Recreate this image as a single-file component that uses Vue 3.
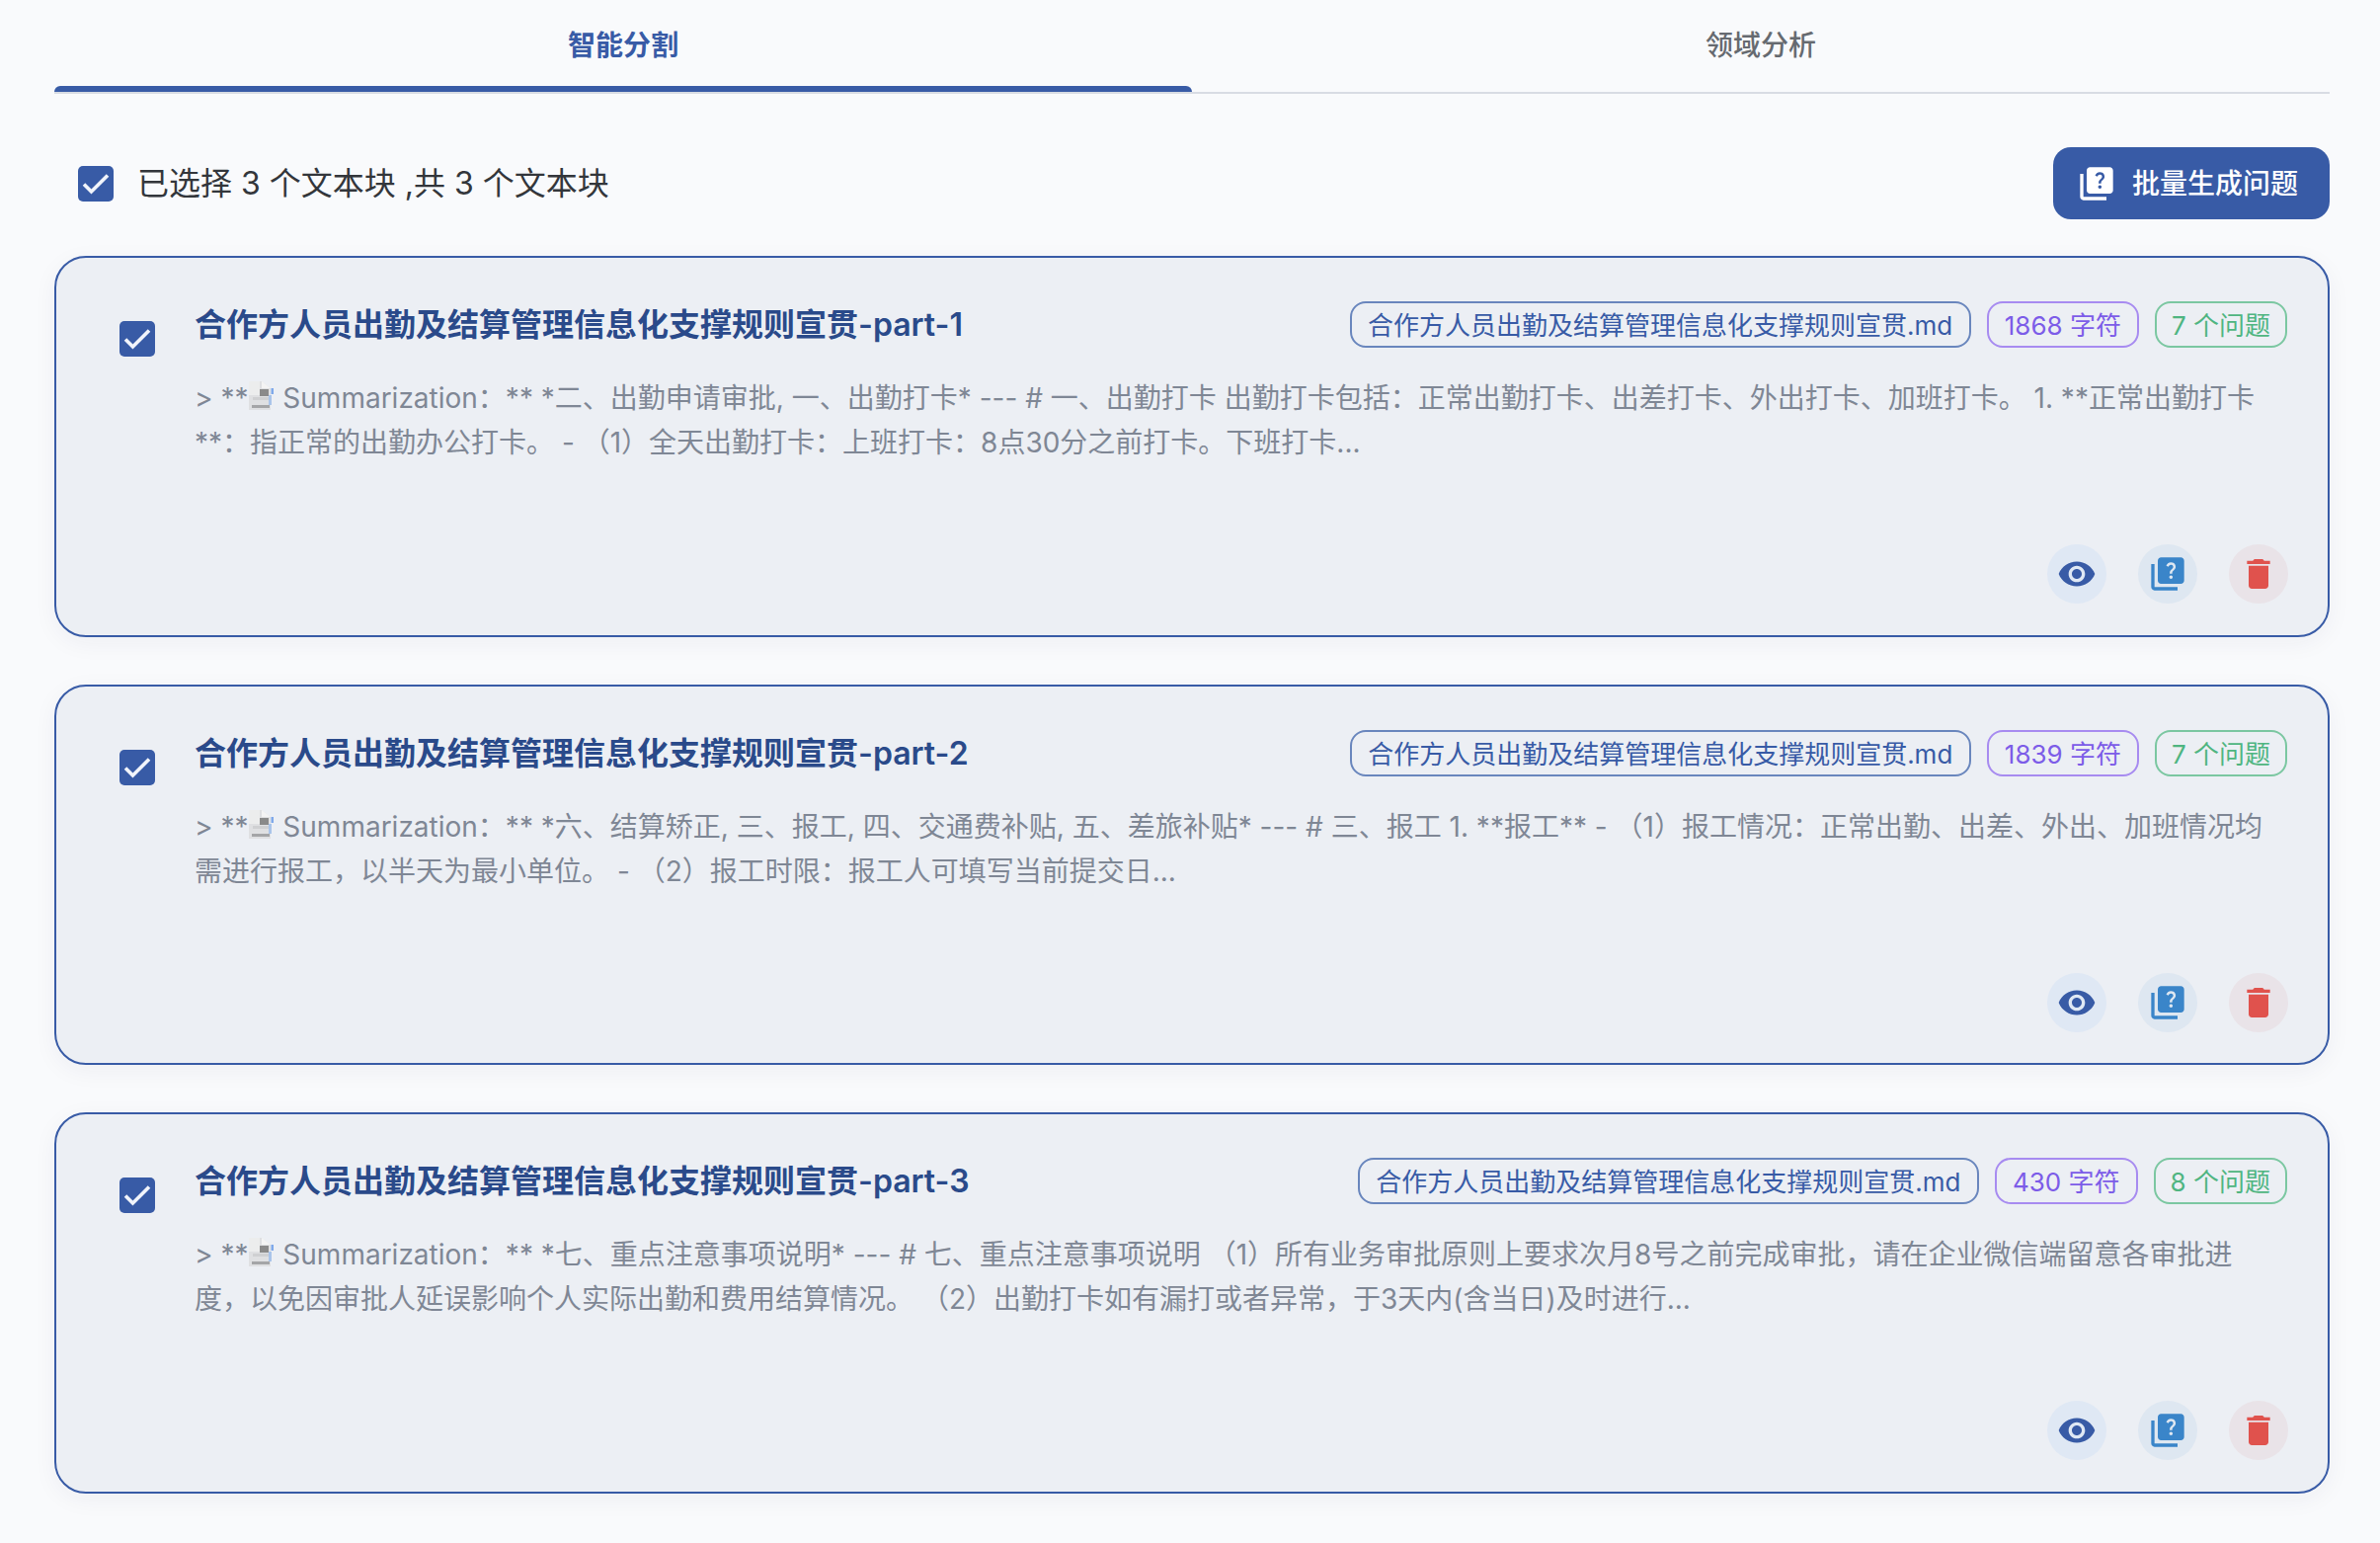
<script setup>
const quiz = 'M4 6H2v14c0 1.1.9 2 2 2h14v-2H4V6zm16-4H8c-1.1 0-2 .9-2 2v12c0 1.1.9 2 2 2h12c1.1 0 2-.9 2-2V4c0-1.1-.9-2-2-2zm-5.99 13c-.59 0-1.05-.47-1.05-1.05 0-.59.47-1.04 1.05-1.04.59 0 1.04.45 1.04 1.04-.01.58-.45 1.05-1.04 1.05zm2.5-6.17c-.63.93-1.23 1.21-1.56 1.81-.13.24-.18.4-.18 1.18h-1.52c0-.41-.06-1.08.26-1.65.41-.73 1.18-1.17 1.63-1.81.48-.68.21-1.94-1.14-1.94-.88 0-1.32.67-1.5 1.23l-1.37-.57C11.51 5.96 12.52 5 13.99 5c1.23 0 2.08.56 2.51 1.26.37.61.58 1.73.01 2.57z'
const file = '合作方人员出勤及结算管理信息化支撑规则宣贯.md'
const cards = [
  { title: '合作方人员出勤及结算管理信息化支撑规则宣贯-part-1', chars: '1868 字符', qs: '7 个问题',
    l1: ' Summarization：** *二、出勤申请审批, 一、出勤打卡* --- # 一、出勤打卡 出勤打卡包括：正常出勤打卡、出差打卡、外出打卡、加班打卡。 1. **正常出勤打卡',
    l2: '**：指正常的出勤办公打卡。 - （1）全天出勤打卡：上班打卡：8点30分之前打卡。下班打卡...' },
  { title: '合作方人员出勤及结算管理信息化支撑规则宣贯-part-2', chars: '1839 字符', qs: '7 个问题',
    l1: ' Summarization：** *六、结算矫正, 三、报工, 四、交通费补贴, 五、差旅补贴* --- # 三、报工 1. **报工** - （1）报工情况：正常出勤、出差、外出、加班情况均',
    l2: '需进行报工，以半天为最小单位。 - （2）报工时限：报工人可填写当前提交日...' },
  { title: '合作方人员出勤及结算管理信息化支撑规则宣贯-part-3', chars: '430 字符', qs: '8 个问题',
    l1: ' Summarization：** *七、重点注意事项说明* --- # 七、重点注意事项说明 （1）所有业务审批原则上要求次月8号之前完成审批，请在企业微信端留意各审批进',
    l2: '度，以免因审批人延误影响个人实际出勤和费用结算情况。 （2）出勤打卡如有漏打或者异常，于3天内(含当日)及时进行...' },
]
</script>

<template>
  <div class="page">
    <div class="tabs">
      <div class="tab active">智能分割<span class="indicator"></span></div>
      <div class="tab">领域分析</div>
    </div>

    <div class="toolbar">
      <div class="select-all">
        <span class="check">
          <svg viewBox="0 0 36 36" width="36" height="36"><path d="M6 18.5l7.5 7.5 16.5-16.5" fill="none" stroke="#f1f4fb" stroke-width="3.6" /></svg>
        </span>
        <span class="select-text">已选择 3 个文本块 ,共 3 个文本块</span>
      </div>
      <button class="primary">
        <svg viewBox="0 0 24 24" width="40" height="40"><path :d="quiz" fill="#fff" /></svg>
        <span class="primary-text">批量生成问题</span>
      </button>
    </div>

    <div class="list">
      <div v-for="c in cards" :key="c.title" class="card">
        <span class="check card-check">
          <svg viewBox="0 0 36 36" width="36" height="36"><path d="M6 18.5l7.5 7.5 16.5-16.5" fill="none" stroke="#f1f4fb" stroke-width="3.6" /></svg>
        </span>
        <div class="main">
          <div class="head">
            <div class="title">{{ c.title }}</div>
            <div class="tags">
              <span class="tag tag-file">{{ file }}</span>
              <span class="tag tag-chars">{{ c.chars }}</span>
              <span class="tag tag-qs">{{ c.qs }}</span>
            </div>
          </div>
          <div class="body">
            <div class="line">&gt; **<svg class="doc" viewBox="0 0 26 29" width="26" height="29"><path d="M1 0h13l9 7v22H1z" fill="#dfe0e2" /><path d="M1 0h11v14H1z" fill="#eceded" /><path d="M14 0l9 7h-9z" fill="#f4f4f4" /><path d="M12 8h9v7h-9z" fill="#8a8a8a" /><path d="M5 16h16v3H5z" fill="#cfd0d2" /><path d="M4 24h18v3H4z" fill="#a4a5a7" /><path d="M23.5 7H26v6h-2.500z" fill="#7fa9ea" /><path d="M21 14h3v10h-3z" fill="#a9c4ea" /></svg>{{ c.l1 }}</div>
            <div class="line">{{ c.l2 }}</div>
          </div>
          <div class="actions">
            <span class="round round-eye">
              <svg viewBox="0 0 24 24" width="40" height="40"><path fill="#385ba6" d="M12 4.5C7 4.5 2.73 7.61 1 12c1.73 4.39 6 7.5 11 7.5s9.27-3.11 11-7.5c-1.730-4.390-6-7.500-11-7.500zM12 17c-2.760 0-5-2.240-5-5s2.240-5 5-5 5 2.240 5 5-2.240 5-5 5zm0-8c-1.660 0-3 1.340-3 3s1.340 3 3 3 3-1.340 3-3-1.340-3-3-3z" /></svg>
            </span>
            <span class="round round-quiz">
              <svg viewBox="0 0 24 24" width="40" height="40"><path fill="#3a85c9" :d="quiz" /></svg>
            </span>
            <span class="round round-del">
              <svg viewBox="0 0 24 24" width="40" height="40"><path fill="#e0524d" d="M6 19c0 1.100.9 2 2 2h8c1.100 0 2-.9 2-2V7H6v12zM19 4h-3.500l-1-1h-5l-1 1H5v2h14V4z" /></svg>
            </span>
          </div>
        </div>
      </div>
    </div>
  </div>
</template>

<style>
html, body { background: #f9fafc; }
</style>

<style scoped>
.page {
  box-sizing: border-box;
  width: 2410px;
  height: 1562px;
  padding: 0 51px 0 55px;
  background: #f9fafc;
  font-family: Inter, "Noto Sans CJK SC", sans-serif;
  overflow: hidden;
}
.tabs {
  display: flex;
  height: 95px;
  border-bottom: 2px solid #d8dce3;
  box-sizing: border-box;
}
.tab {
  position: relative;
  flex: 1;
  display: flex;
  align-items: center;
  justify-content: center;
  padding-bottom: 6px;
  font-size: 28px;
  font-weight: 500;
  color: #666a70;
}
.tab.active { color: #385ba6; font-weight: 600; }
.indicator {
  position: absolute;
  left: 0;
  right: 0;
  bottom: 0;
  height: 6px;
  background: #385ba6;
  border-radius: 6px 6px 0 0;
}
.toolbar {
  display: flex;
  align-items: center;
  justify-content: space-between;
  margin-top: 54px;
  margin-bottom: 37px;
  padding-left: 24px;
}
.select-all { display: flex; align-items: center; gap: 24px; }
.select-text { font-size: 32px; color: #33363b; padding-bottom: 6px; }
.check {
  display: block;
  width: 36px;
  height: 36px;
  flex: none;
  border-radius: 5px;
  background: #385ba6;
}
.check svg { display: block; }
.primary {
  display: flex;
  align-items: center;
  gap: 16px;
  box-sizing: border-box;
  width: 280px;
  height: 73px;
  padding: 0 0 0 24px;
  border: 0;
  border-radius: 18px;
  background: #385ba6;
  color: #fff;
  font: 500 28px Inter, "Noto Sans CJK SC", sans-serif;
}
.primary-text { padding-bottom: 3px; }
.list { display: flex; flex-direction: column; gap: 48px; }
.card {
  box-sizing: border-box;
  display: flex;
  height: 385.5px;
  padding: 44px 40px 31.5px 64px;
  border: 2px solid #385ba6;
  border-radius: 32px;
  background: #ecEff4;
  box-shadow: 0 6px 24px rgba(30, 40, 70, 0.05);
}
.card-check { margin-top: 20px; margin-right: 40px; }
.main { flex: 1; min-width: 0; display: flex; flex-direction: column; }
.head { display: flex; align-items: center; justify-content: space-between; height: 47px; }
.title { font-size: 32px; font-weight: 600; color: #2a4a8a; margin-top: -5px; }
.tags { display: flex; gap: 16px; margin-right: 1px; }
.tag {
  box-sizing: border-box;
  height: 47px;
  display: flex;
  align-items: center;
  padding: 0 16px 2px;
  border: 2px solid;
  border-radius: 16px;
  font-size: 26px;
}
.tag-file { padding: 0 16.5px 2px; color: #385ba6; border-color: #6986bd; }
.tag-chars { color: #7c5ce8; border-color: #a78bf0; }
.tag-qs { padding: 0 15px 2px; color: #4fb581; border-color: #7bc7a1; }
.body { margin-top: 29px; font-size: 28px; line-height: 45px; color: #7f8795; }
.line { white-space: nowrap; }
.doc { vertical-align: -2px; margin-right: 1px; filter: blur(0.6px); }
.actions { margin-top: auto; display: flex; justify-content: flex-end; gap: 32px; }
.round {
  width: 60px;
  height: 60px;
  border-radius: 50%;
  display: flex;
  align-items: center;
  justify-content: center;
}
.round-eye { background: #dfe8f4; }
.round-quiz { background: #dee7f1; }
.round-del { background: #e9e3e8; }
</style>
